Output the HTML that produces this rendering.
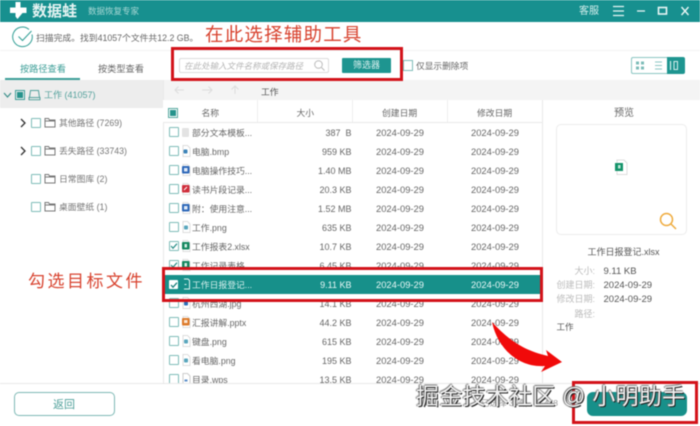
<!DOCTYPE html>
<html lang="zh-CN"><head><meta charset="utf-8"><title>数据蛙</title>
<style>
html,body{margin:0;padding:0;background:#fff}
#p{position:relative;width:700px;height:426px;overflow:hidden;background:#fff;font-family:"Liberation Sans","Noto Sans CJK SC",sans-serif;color:#555;filter:blur(.4px)}
#p div{position:absolute;white-space:nowrap}
.cb{width:8px;height:8px;border:1px solid #7fbdb8;background:#fff;border-radius:1px}
.sz{width:51.5px;text-align:right;font-size:9px;line-height:14px;color:#666;margin-top:1px}
.d1,.d2{font-size:9.4px;line-height:14px;color:#666;margin-top:1px}
.n{font-size:8.8px;line-height:14px;color:#666;margin:1px 0 0 -1px}
.tr{font-size:8.8px;line-height:14px;color:#777}
.red{font-size:17px;line-height:22px;color:#d8432f}
.lb{left:540px;width:55px;text-align:right;font-size:9px;line-height:14px;color:#bbb}
.v{left:603.5px;font-size:9.5px;line-height:14px;color:#555}
</style></head><body><div id="p">

<!-- header -->
<div style="left:0;top:0;width:700px;height:22px;background:#17908f"></div>
<svg style="position:absolute;left:9px;top:1px" width="19" height="20" viewBox="0 0 19 20"><path d="M6.500 1h5v5.500h6v5.500h-4l-5 6-2-2.500v-3.500h-5.500v-5.500h5.500z" fill="#fff"/></svg>
<div style="left:32px;top:2px;font-size:15px;line-height:20px;font-weight:bold;color:#e6f4f3">数据蛙</div>
<div style="left:88px;top:5px;font-size:8.500px;line-height:13px;color:#a9d8d5">数据恢复专家</div>
<div style="left:579px;top:5px;font-size:10px;line-height:14px;color:#d4eeec">客服</div>
<svg style="position:absolute;left:610px;top:4px" width="85" height="14" viewBox="0 0 85 14" fill="none" stroke="#e8f6f5" stroke-width="1.300"><path d="M3 2.500h11M3 7h11M3 11.500h11"/><path d="M27 7h8"/><rect x="48.500" y="3.500" width="8" height="6.500" stroke-width="1.600"/><path d="M71.500 3l7 8M78.500 3l-7 8" stroke-width="1.400"/></svg>

<!-- status -->
<svg style="position:absolute;left:11px;top:25px" width="24" height="24" viewBox="0 0 24 24" fill="none" stroke="#2f9d94" stroke-width="1"><path d="M21 9.500a9.800 9.800 0 1 1-3-5"/><path d="M7.500 11.500l4 4 9-9.500"/></svg>
<div style="left:36px;top:31px;font-size:8.800px;line-height:14px;color:#666">扫描完成。找到41057个文件共12.2 GB。</div>
<div class="red" style="left:205px;top:24px;font-size:18.500px;letter-spacing:1.200px">在此选择辅助工具</div>
<div style="left:0;top:50px;width:700px;height:1px;background:#f3f3f3"></div>

<!-- tabs -->
<div style="left:20px;top:62px;font-size:9.200px;line-height:14px;color:#3c9e97">按路径查看</div>
<div style="left:98px;top:62px;font-size:9.200px;line-height:14px;color:#666">按类型查看</div>
<div style="left:5px;top:78px;width:75px;height:2px;background:#3c9e97"></div>

<!-- search -->
<div style="left:179px;top:58px;width:148px;height:13px;border:1px solid #dcdcdc;border-radius:2px"></div>
<div style="left:184px;top:59px;font-size:8.500px;line-height:14px;color:#b5b5b5;font-style:italic">在此处输入文件名称或保存路径</div>
<svg style="position:absolute;left:313px;top:59px" width="13" height="13" viewBox="0 0 13 13" fill="none" stroke="#bbb"><circle cx="5.500" cy="5.500" r="3.800"/><path d="M8.500 8.500l3 3"/></svg>
<div style="left:342px;top:58px;width:49px;height:15px;background:#1e9590;border-radius:1px;color:#d9f0ee;font-size:9px;line-height:15px;text-align:center">筛选器</div>
<div style="left:403px;top:60px;width:8px;height:9px;border:1px solid #7fbdb8"></div>
<div style="left:416px;top:59px;font-size:8.700px;line-height:14px;color:#666">仅显示删除项</div>
<div style="left:631px;top:57px;width:18px;height:15px;border:1px solid #8cc7c3;border-right:0;border-radius:2px 0 0 2px"></div>
<div style="left:649px;top:57px;width:18px;height:15px;border-top:1px solid #8cc7c3;border-bottom:1px solid #8cc7c3"></div>
<div style="left:667px;top:57px;width:18px;height:17px;background:#1e9590;border-radius:0 2px 2px 0"></div>
<svg style="position:absolute;left:631px;top:57px" width="54" height="17" viewBox="0 0 54 17" fill="none"><g fill="#7cbcb8"><rect x="5" y="4.500" width="3" height="3"/><rect x="10" y="4.500" width="3" height="3"/><rect x="5" y="9.500" width="3" height="3"/><rect x="10" y="9.500" width="3" height="3"/></g><path d="M24 5h7M24 8.500h7M24 12h7" stroke="#8cc7c3"/><path d="M39.500 4v9" stroke="#d5eeec" stroke-width="1.200"/><rect x="43" y="4.500" width="3.500" height="8" stroke="#d5eeec"/></svg>

<!-- left tree -->
<div style="left:0;top:80px;width:163px;height:28px;background:#ededed"></div>
<div style="left:163px;top:80px;width:537px;height:20px;background:#f4f4f4"></div>
<svg style="position:absolute;left:3px;top:91px" width="10" height="9" viewBox="0 0 10 9" fill="none" stroke="#3b8f8a" stroke-width="1.200"><path d="M1 2l3.500 4 3.500-4"/></svg>
<div style="left:15px;top:90px;width:8px;height:8px;border:1px solid #3c9e97;background:#eee"></div>
<div style="left:17px;top:92px;width:6px;height:6px;background:#26938c"></div>
<svg style="position:absolute;left:28px;top:89px" width="13" height="12" viewBox="0 0 13 12" fill="none" stroke="#55a19d"><path d="M2.500 1.500h8l1 7h-10zM1 8.500h11v2.200H1z"/></svg>
<div style="left:44px;top:88px;font-size:9px;line-height:14px;color:#56a29d">工作 (41057)</div>

<svg style="position:absolute;left:19px;top:117px" width="8" height="12" viewBox="0 0 8 12" fill="none" stroke="#333" stroke-width="1.300"><path d="M2 2l4 4-4 4"/></svg>
<svg style="position:absolute;left:19px;top:145px" width="8" height="12" viewBox="0 0 8 12" fill="none" stroke="#333" stroke-width="1.300"><path d="M2 2l4 4-4 4"/></svg>
<div class="cb" style="left:31px;top:118px"></div><div class="cb" style="left:31px;top:146px"></div><div class="cb" style="left:31px;top:174px"></div><div class="cb" style="left:31px;top:202px"></div>
<svg style="position:absolute;left:44px;top:117px" width="12" height="11" viewBox="0 0 12 11" fill="none" stroke="#777"><path d="M1 3V1.500h3.500L5.500 3H11v7H1zM1 4h10"/></svg>
<svg style="position:absolute;left:44px;top:145px" width="12" height="11" viewBox="0 0 12 11" fill="none" stroke="#777"><path d="M1 3V1.500h3.500L5.500 3H11v7H1zM1 4h10"/></svg>
<svg style="position:absolute;left:44px;top:173px" width="12" height="11" viewBox="0 0 12 11" fill="none" stroke="#777"><path d="M1 3V1.500h3.500L5.500 3H11v7H1zM1 4h10"/></svg>
<svg style="position:absolute;left:44px;top:201px" width="12" height="11" viewBox="0 0 12 11" fill="none" stroke="#777"><path d="M1 3V1.500h3.500L5.500 3H11v7H1zM1 4h10"/></svg>
<div class="tr" style="left:59px;top:116px">其他路径 (7269)</div>
<div class="tr" style="left:59px;top:144px">丢失路径 (33743)</div>
<div class="tr" style="left:59px;top:172px">日常图库 (2)</div>
<div class="tr" style="left:59px;top:200px">桌面壁纸 (1)</div>
<div class="red" style="left:28px;top:271px;letter-spacing:2.500px;font-size:17px">勾选目标文件</div>

<div style="left:163px;top:80px;width:1px;height:303px;background:#e9e9e9"></div>

<!-- breadcrumb -->
<svg style="position:absolute;left:172px;top:83px" width="72" height="14" viewBox="0 0 72 14" fill="none" stroke="#dcdcdc"><path d="M12 7H3M6.500 3.500L3 7l3.500 3.500"/><path d="M30 7h10M36.500 3.500L40 7l-3.500 3.500"/><path d="M63 11V3M59.500 6.500L63 3l3.500 3.500"/></svg>
<div style="left:261px;top:85px;font-size:8.800px;line-height:14px;color:#555">工作</div>

<!-- table header -->
<div style="left:163px;top:100px;width:379px;height:22px;background:#fff;border-bottom:1px solid #e9e9e9"></div>
<div style="left:257px;top:100px;width:1px;height:22px;background:#eee"></div>
<div style="left:352px;top:100px;width:1px;height:22px;background:#eee"></div>
<div style="left:447px;top:100px;width:1px;height:22px;background:#eee"></div>
<div style="left:168px;top:108px;width:8px;height:8px;border:1px solid #55a79f;background:#fff"></div>
<div style="left:170px;top:110px;width:6px;height:6px;background:#26938c"></div>
<div style="left:201.500px;top:106px;font-size:8.800px;line-height:14px;color:#666">名称</div>
<div style="left:296.500px;top:106px;font-size:8.800px;line-height:14px;color:#666">大小</div>
<div style="left:382px;top:106px;font-size:8.800px;line-height:14px;color:#666">创建日期</div>
<div style="left:477px;top:106px;font-size:8.800px;line-height:14px;color:#666">修改日期</div>

<!-- rows -->
<div style="left:163px;top:123px;width:379px;height:260px;overflow:hidden">

<div class="cb" style="left:6px;top:4px"></div>
<div style="left:19px;top:5px;width:7px;height:9px;background:#e3e3e3;border-radius:1px"></div>
<div class="n" style="left:30px;top:2px">部分文本模板...</div><div class="sz" style="left:137px;top:2px">387&nbsp;&nbsp;B</div><div class="d1" style="left:213px;top:2px">2024-09-29</div><div class="d2" style="left:308px;top:2px">2024-09-29</div>

<div class="cb" style="left:6px;top:23px"></div>
<svg style="position:absolute;left:18px;top:22px" width="10" height="12" viewBox="0 0 10 12"><path d="M2 .5h4.500L9 3v8.500H2z" fill="#fff" stroke="#ddd"/><rect x="2.500" y="4.500" width="4" height="4" rx="1" fill="#3b83b8"/></svg>
<div class="n" style="left:30px;top:21px">电脑.bmp</div><div class="sz" style="left:137px;top:21px">959 KB</div><div class="d1" style="left:213px;top:21px">2024-09-29</div><div class="d2" style="left:308px;top:21px">2024-09-29</div>

<div class="cb" style="left:6px;top:42px"></div>
<svg style="position:absolute;left:18px;top:41px" width="10" height="12" viewBox="0 0 10 12"><path d="M2 .5h4.500L9 3v8.500H2z" fill="#fff" stroke="#ddd"/><rect x="1" y="2" width="7.500" height="7.500" rx="1" fill="#2d67b8"/><rect x="3" y="4" width="3.500" height="3.500" fill="#dfe9f7"/></svg>
<div class="n" style="left:30px;top:40px">电脑操作技巧...</div><div class="sz" style="left:137px;top:40px">1.40 MB</div><div class="d1" style="left:213px;top:40px">2024-09-29</div><div class="d2" style="left:308px;top:40px">2024-09-29</div>

<div class="cb" style="left:6px;top:61px"></div>
<svg style="position:absolute;left:18px;top:60px" width="10" height="12" viewBox="0 0 10 12"><path d="M2 .5h4.500L9 3v8.500H2z" fill="#fff" stroke="#ddd"/><rect x="1" y="2" width="7.500" height="7.500" rx="1" fill="#cf2e3c"/><path d="M3 7l3-3" stroke="#fff"/></svg>
<div class="n" style="left:30px;top:59px">读书片段记录...</div><div class="sz" style="left:137px;top:59px">20.3 KB</div><div class="d1" style="left:213px;top:59px">2024-09-29</div><div class="d2" style="left:308px;top:59px">2024-09-29</div>

<div class="cb" style="left:6px;top:80px"></div>
<svg style="position:absolute;left:18px;top:79px" width="10" height="12" viewBox="0 0 10 12"><path d="M2 .5h4.500L9 3v8.500H2z" fill="#fff" stroke="#ddd"/><rect x="1" y="2" width="7.500" height="7.500" rx="1" fill="#2d67b8"/><rect x="3" y="4" width="3.500" height="3.500" fill="#dfe9f7"/></svg>
<div class="n" style="left:30px;top:78px">附：使用注意...</div><div class="sz" style="left:137px;top:78px">1.52 MB</div><div class="d1" style="left:213px;top:78px">2024-09-29</div><div class="d2" style="left:308px;top:78px">2024-09-29</div>

<div class="cb" style="left:6px;top:99px"></div>
<svg style="position:absolute;left:18px;top:98px" width="10" height="12" viewBox="0 0 10 12"><path d="M2 .5h4.500L9 3v8.500H2z" fill="#fff" stroke="#ddd"/><rect x="3" y="4.500" width="4" height="4" rx="1" fill="#5aa6bd"/></svg>
<div class="n" style="left:30px;top:97px">工作.png</div><div class="sz" style="left:137px;top:97px">635 KB</div><div class="d1" style="left:213px;top:97px">2024-09-29</div><div class="d2" style="left:308px;top:97px">2024-09-29</div>

<div class="cb" style="left:6px;top:118px"></div>
<svg style="position:absolute;left:7px;top:119px" width="8" height="8" viewBox="0 0 8 8" fill="none" stroke="#2b8f88" stroke-width="1.200"><path d="M1 4l2 2.200 4-4.500"/></svg>
<svg style="position:absolute;left:18px;top:117px" width="10" height="12" viewBox="0 0 10 12"><path d="M2 .5h4.500L9 3v8.500H2z" fill="#fff" stroke="#ddd"/><rect x="1" y="2" width="7.500" height="7.500" rx="1" fill="#15875f"/><rect x="3.500" y="4" width="2.500" height="3.500" fill="#d8f0e6"/></svg>
<div class="n" style="left:30px;top:116px">工作报表2.xlsx</div><div class="sz" style="left:137px;top:116px">10.7 KB</div><div class="d1" style="left:213px;top:116px">2024-09-29</div><div class="d2" style="left:308px;top:116px">2024-09-29</div>

<div class="cb" style="left:6px;top:137px"></div>
<svg style="position:absolute;left:7px;top:138px" width="8" height="8" viewBox="0 0 8 8" fill="none" stroke="#2b8f88" stroke-width="1.200"><path d="M1 4l2 2.200 4-4.500"/></svg>
<svg style="position:absolute;left:18px;top:136px" width="10" height="12" viewBox="0 0 10 12"><path d="M2 .5h4.500L9 3v8.500H2z" fill="#fff" stroke="#ddd"/><rect x="1" y="2" width="7.500" height="7.500" rx="1" fill="#15875f"/><rect x="3.500" y="4" width="2.500" height="3.500" fill="#d8f0e6"/></svg>
<div class="n" style="left:30px;top:135px">工作记录表格...</div><div class="sz" style="left:137px;top:135px">6.45 KB</div><div class="d1" style="left:213px;top:135px">2024-09-29</div><div class="d2" style="left:308px;top:135px">2024-09-29</div>

<div style="left:0;top:152px;width:379px;height:19px;background:#17908a"></div>
<div style="left:6px;top:157px;width:9px;height:9px;background:#fff;border-radius:1px"></div>
<svg style="position:absolute;left:6.500px;top:157.500px" width="8" height="8" viewBox="0 0 8 8" fill="none" stroke="#17807b" stroke-width="1.300"><path d="M1 4l2 2.200 4-4.500"/></svg>
<svg style="position:absolute;left:18px;top:155px" width="10" height="12" viewBox="0 0 10 12" fill="none" stroke="#dff3f1"><path d="M3 1h4l1.500 1.500V11H3M3.500 6.500h2"/></svg>
<div class="n" style="left:30px;top:154px;color:#d9f1ef">工作日报登记...</div><div class="sz" style="left:137px;top:154px;color:#e8f7f6">9.11 KB</div><div class="d1" style="left:213px;top:154px;color:#e8f7f6">2024-09-29</div><div class="d2" style="left:308px;top:154px;color:#e8f7f6">2024-09-29</div>

<div class="cb" style="left:6px;top:175px"></div>
<svg style="position:absolute;left:18px;top:174px" width="10" height="12" viewBox="0 0 10 12"><path d="M2 .5h4.500L9 3v8.500H2z" fill="#fff" stroke="#ddd"/><rect x="3" y="4.500" width="4" height="4" rx="1" fill="#2d6fb8"/></svg>
<div class="n" style="left:30px;top:173px">杭州西湖.jpg</div><div class="sz" style="left:137px;top:173px">14.1 KB</div><div class="d1" style="left:213px;top:173px">2024-09-29</div><div class="d2" style="left:308px;top:173px">2024-09-29</div>

<div class="cb" style="left:6px;top:194px"></div>
<svg style="position:absolute;left:18px;top:193px" width="10" height="12" viewBox="0 0 10 12"><path d="M2 .5h4.500L9 3v8.500H2z" fill="#fff" stroke="#ddd"/><rect x="1" y="2" width="7.500" height="7.500" rx="1" fill="#dd7a2a"/><rect x="3" y="4" width="3.500" height="3" fill="#fbe6d4"/></svg>
<div class="n" style="left:30px;top:192px">汇报讲解.pptx</div><div class="sz" style="left:137px;top:192px">44.2 KB</div><div class="d1" style="left:213px;top:192px">2024-09-29</div><div class="d2" style="left:308px;top:192px">2024-09-29</div>

<div class="cb" style="left:6px;top:213px"></div>
<svg style="position:absolute;left:18px;top:212px" width="10" height="12" viewBox="0 0 10 12"><path d="M2 .5h4.500L9 3v8.500H2z" fill="#fff" stroke="#ddd"/><rect x="3" y="4.500" width="4" height="4" rx="1" fill="#5aa6bd"/></svg>
<div class="n" style="left:30px;top:211px">键盘.png</div><div class="sz" style="left:137px;top:211px">615 KB</div><div class="d1" style="left:213px;top:211px">2024-09-29</div><div class="d2" style="left:308px;top:211px">2024-09-29</div>

<div class="cb" style="left:6px;top:232px"></div>
<svg style="position:absolute;left:18px;top:231px" width="10" height="12" viewBox="0 0 10 12"><path d="M2 .5h4.500L9 3v8.500H2z" fill="#fff" stroke="#ddd"/><rect x="3" y="4.500" width="4" height="4" rx="1" fill="#5aa6bd"/></svg>
<div class="n" style="left:30px;top:230px">看电脑.png</div><div class="sz" style="left:137px;top:230px">195 KB</div><div class="d1" style="left:213px;top:230px">2024-09-29</div><div class="d2" style="left:308px;top:230px">2024-09-29</div>

<div class="cb" style="left:6px;top:251px"></div>
<svg style="position:absolute;left:18px;top:250px" width="10" height="12" viewBox="0 0 10 12"><path d="M2 .5h4.500L9 3v8.500H2z" fill="#fff" stroke="#ccc"/><path d="M3.500 7.500h3" stroke="#5b8fc9" stroke-width="2"/></svg>
<div class="n" style="left:30px;top:249px">目录.wps</div><div class="sz" style="left:137px;top:249px">13.5 KB</div><div class="d1" style="left:213px;top:249px">2024-09-29</div><div class="d2" style="left:308px;top:249px">2024-09-29</div>
</div>

<!-- preview -->
<div style="left:542px;top:100px;width:1px;height:283px;background:#e9e9e9"></div>
<div style="left:614px;top:107px;font-size:10px;line-height:14px;color:#666">预览</div>
<div style="left:556px;top:124px;width:129px;height:109px;border:1px solid #ececec;border-radius:5px"></div>
<svg style="position:absolute;left:614px;top:159px" width="14" height="17" viewBox="0 0 14 17"><path d="M3 1h7l3 3v11.500H3z" fill="#fff" stroke="#ddd"/><rect x="1" y="4" width="8" height="8" fill="#14936a"/><rect x="4" y="6" width="2.500" height="3.500" fill="#bfe8d8"/></svg>
<svg style="position:absolute;left:659px;top:212px" width="20" height="20" viewBox="0 0 20 20" fill="none" stroke="#efab3d" stroke-width="1.500"><circle cx="7.500" cy="7.500" r="6"/><path d="M12 12l5 5"/></svg>
<div style="left:587.500px;top:245px;font-size:9px;line-height:14px;color:#555">工作日报登记.xlsx</div>
<div class="lb" style="top:264px">大小:</div>
<div class="lb" style="top:278px">创建日期:</div>
<div class="lb" style="top:292px">修改日期:</div>
<div class="lb" style="top:307px">路径:</div>
<div class="v" style="top:265px">9.11 KB</div>
<div class="v" style="top:279px">2024-09-29</div>
<div class="v" style="top:293px">2024-09-29</div>
<div style="left:556.500px;top:320px;font-size:8.500px;line-height:14px;color:#555">工作</div>

<!-- footer -->
<div style="left:0;top:383px;width:700px;height:43px;background:#fff;border-top:1px solid #e8e8e8"></div>
<div style="left:13.500px;top:392px;width:99px;height:22px;border:1px solid #7eb9b5;border-radius:5px;color:#4d9f99;font-size:11px;line-height:24px;text-align:center">返回</div>
<div style="left:481px;top:397px;font-size:8.500px;line-height:12px;color:#999">已选择 3 项，共 478</div>
<div style="left:587px;top:392px;width:100px;height:24px;background:#17908a;border-radius:6px"></div>

<!-- red annotations -->
<div style="left:171px;top:47px;width:226px;height:28px;border:3px solid #d3131a"></div>
<div style="left:162px;top:267px;width:375px;height:29px;border:3px solid #d3131a"></div>
<div style="left:572px;top:381px;width:120px;height:37px;border:3px solid #d3131a"></div>
<svg style="position:absolute;left:488px;top:320px" width="80" height="60" viewBox="488 320 80 60"><path d="M492 322C505 336 520 350 548 356L546 350 562 362 541 372 545 366C520 368 498 350 492 322z" fill="#f10a0a"/></svg>

<!-- watermark -->
<div style="left:416px;top:382px;font-size:23px;line-height:28px;color:#f2f2f2;text-shadow:1px 1px 0 #222,-1px 0 1px #666,0 -1px 1px #777;letter-spacing:.25px">掘金技术社区 @ 小明助手</div>
</div></body></html>
